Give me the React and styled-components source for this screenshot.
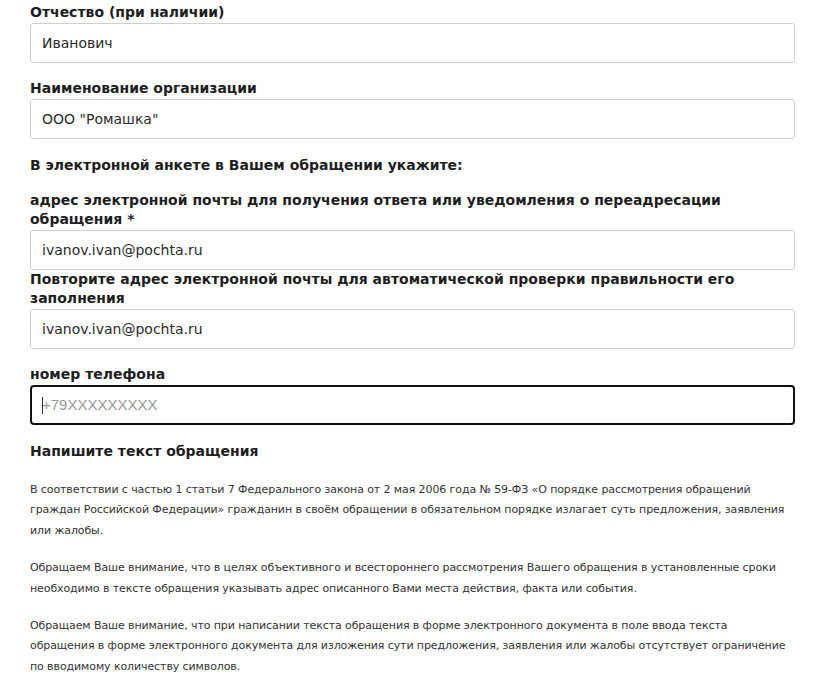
import React from "react";
import styled, { createGlobalStyle } from "styled-components";

const GlobalStyle = createGlobalStyle`
  html, body {
    margin: 0;
    padding: 0;
    background: #fff;
  }
  body {
    font-family: Verdana, "DejaVu Sans", sans-serif;
    color: #222;
  }
`;

const Form = styled('form')`
  padding: 3px 29px 0 30px;
  display: flex;
  flex-direction: column;
`;

const Field = styled('div')`
  display: flex;
  flex-direction: column;
  margin-bottom: ${props => props.tight ? "0" : "16px"};
`;

const Label = styled('label')`
  font-size: 14px;
  font-weight: bold;
  line-height: 19px;
  margin-bottom: 1px;
  color: #1e1e1e;
`;

const Heading = styled('div')`
  font-size: 14px;
  font-weight: bold;
  line-height: 20px;
  color: #1e1e1e;
  margin-bottom: 16px;
`;

const InputBox = styled('div')`
  position: relative;
  height: 40px;
  box-sizing: border-box;
  border: ${props => props.focused ? "2px solid #111" : "1px solid #cfcfcf"};
  border-radius: ${props => props.focused ? "4px" : "3px"};
  background: #fff;
  display: flex;
  align-items: center;
  padding-left: ${props => props.focused ? "10px" : "11px"};
`;

const Input = styled('input')`
  border: none;
  outline: none;
  background: transparent;
  width: 100%;
  padding: 0;
  font-family: Verdana, "DejaVu Sans", sans-serif;
  font-size: 14px;
  color: #2a2a2a;
  &::placeholder {
    font-family: "Liberation Sans", Arial, sans-serif;
    font-size: 15px;
    color: #9a9a9a;
  }
`;

const Caret = styled('span')`
  position: absolute;
  left: 10px;
  top: 10px;
  width: 1px;
  height: 17px;
  background: #333;
`;

const Notes = styled('div')`
  padding-top: 3px;
`;

const Text = styled('p')`
  margin: 0 0 17px;
  font-size: 11px;
  line-height: 20.4px;
  letter-spacing: -0.1px;
  color: #333;
`;

const TextField = ({ label, value, placeholder, focused, tight }) => (
  <Field tight={tight}>
    <Label>{label}</Label>
    <InputBox focused={focused}>
      {focused ? <Caret /> : null}
      <Input defaultValue={value} placeholder={placeholder} readOnly />
    </InputBox>
  </Field>
);

const App = () => (
  <>
    <GlobalStyle />
    <Form onSubmit={e => e.preventDefault()}>
      <TextField label="Отчество (при наличии)" value="Иванович" />
      <TextField label="Наименование организации" value='ООО "Ромашка"' />
      <Heading>В электронной анкете в Вашем обращении укажите:</Heading>
      <TextField
        tight
        label="адрес электронной почты для получения ответа или уведомления о переадресации обращения *"
        value="ivanov.ivan@pochta.ru"
      />
      <TextField
        label="Повторите адрес электронной почты для автоматической проверки правильности его заполнения"
        value="ivanov.ivan@pochta.ru"
      />
      <TextField label="номер телефона" placeholder="+79XXXXXXXXX" focused />
      <Heading>Напишите текст обращения</Heading>
      <Notes>
        <Text>
          В соответствии с частью 1 статьи 7 Федерального закона от 2 мая 2006 года № 59-ФЗ «О порядке рассмотрения обращений<br />
          граждан Российской Федерации» гражданин в своём обращении в обязательном порядке излагает суть предложения, заявления<br />
          или жалобы.
        </Text>
        <Text>
          Обращаем Ваше внимание, что в целях объективного и всестороннего рассмотрения Вашего обращения в установленные сроки<br />
          необходимо в тексте обращения указывать адрес описанного Вами места действия, факта или события.
        </Text>
        <Text>
          Обращаем Ваше внимание, что при написании текста обращения в форме электронного документа в поле ввода текста<br />
          обращения в форме электронного документа для изложения сути предложения, заявления или жалобы отсутствует ограничение<br />
          по вводимому количеству символов.
        </Text>
      </Notes>
    </Form>
  </>
);

export default App;
